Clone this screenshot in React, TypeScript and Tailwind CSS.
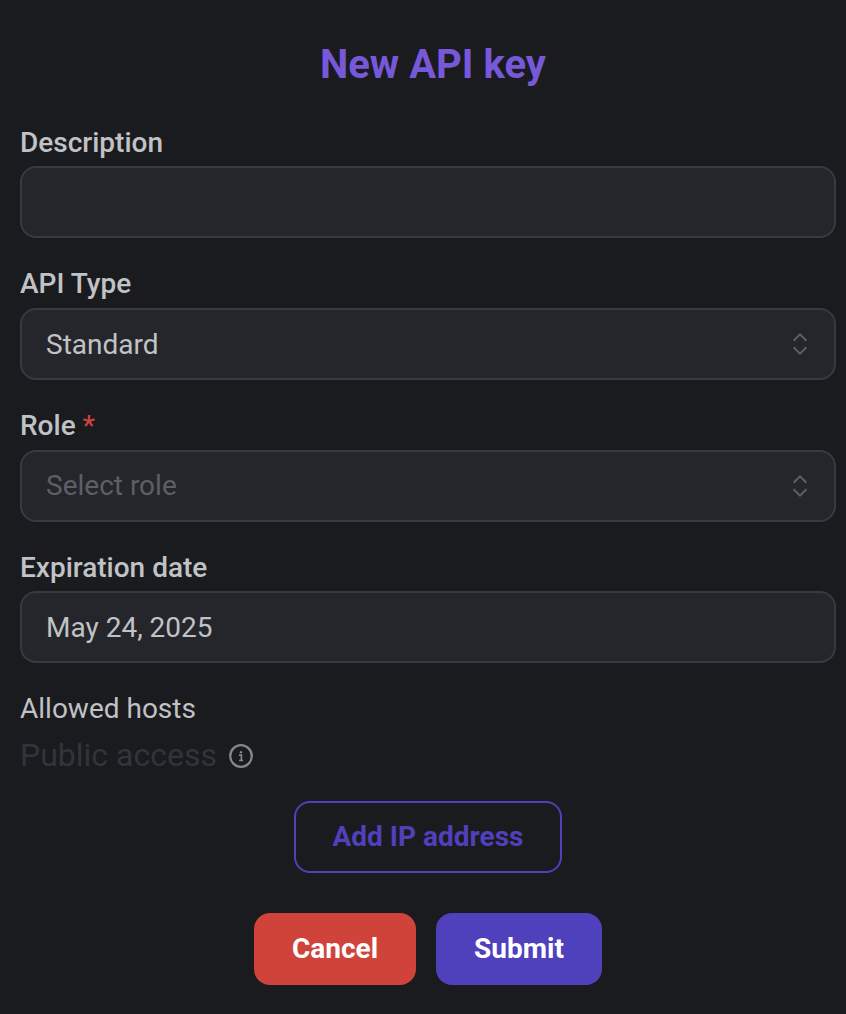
import type { ReactNode } from "react";

function Selector() {
  return (
    <svg width="28" height="28" viewBox="0 0 28 28" fill="none" stroke="#5c5f66" strokeWidth="2" strokeLinecap="butt" strokeLinejoin="miter">
      <path d="M7.6 10.7 14 4.4l6.4 6.3" />
      <path d="M7.6 17.3l6.4 6.3 6.4-6.3" />
    </svg>
  );
}

function InfoIcon() {
  return (
    <svg className="mt-0.5" width="24" height="24" viewBox="0 0 24 24" fill="none">
      <circle cx="12" cy="12" r="10.8" stroke="#868686" strokeWidth="2.3" />
      <circle cx="12" cy="8.2" r="1.2" fill="#868686" />
      <path d="M10 11.1h2.4v5M10.1 16.5h4" stroke="#868686" strokeWidth="1.7" />
    </svg>
  );
}

type FieldProps = { label: string; required?: boolean; children?: ReactNode };

function Field({ label, required, children }: FieldProps) {
  return (
    <div className="mb-[26.4px]">
      <div className="h-[43.4px] leading-[39.4px] font-medium">
        {label}
        {required && <span className="text-[#d0423b]"> *</span>}
      </div>
      <div className="flex h-[72px] items-center justify-between rounded-[16px] border-2 border-[#373a40] bg-[#25262b] pl-6 pr-5">
        {children}
      </div>
    </div>
  );
}

export default function App() {
  return (
    <main className="h-[1014px] w-[846px] overflow-hidden bg-[#1a1b1e] pl-5 pr-2.5 pt-[34.6px] font-['Roboto',sans-serif] text-[28px] text-[#c1c2c5]">
      <h1 className="mb-[28px] h-[60px] pl-[10px] text-center text-[40px] leading-[60px] font-bold text-[#7658d9]">New API key</h1>
      <Field label="Description" />
      <Field label="API Type">
        <span className="pt-0.5">Standard</span>
        <Selector />
      </Field>
      <Field label="Role" required>
        <span className="text-[#5c5f66]">Select role</span>
        <Selector />
      </Field>
      <Field label="Expiration date">
        <span className="pt-0.5">May 24, 2025</span>
      </Field>
      <div className="h-[40px] leading-[38px]">Allowed hosts</div>
      <div className="flex h-[50px] items-center gap-3 text-[32px] leading-[50px] text-[#30353a]">
        <span>Public access</span>
        <InfoIcon />
      </div>
      <div className="mt-[21px] flex justify-center">
        <button className="h-[72px] w-[268px] rounded-[16px] border-2 border-[#4f40bb] font-bold text-[#4f40bb]">Add IP address</button>
      </div>
      <div className="mt-10 flex justify-center gap-5 text-white">
        <button className="h-[72px] w-[162px] rounded-[16px] bg-[#cf433b] font-bold">Cancel</button>
        <button className="h-[72px] w-[166px] rounded-[16px] bg-[#4f40bb] font-bold">Submit</button>
      </div>
    </main>
  );
}
